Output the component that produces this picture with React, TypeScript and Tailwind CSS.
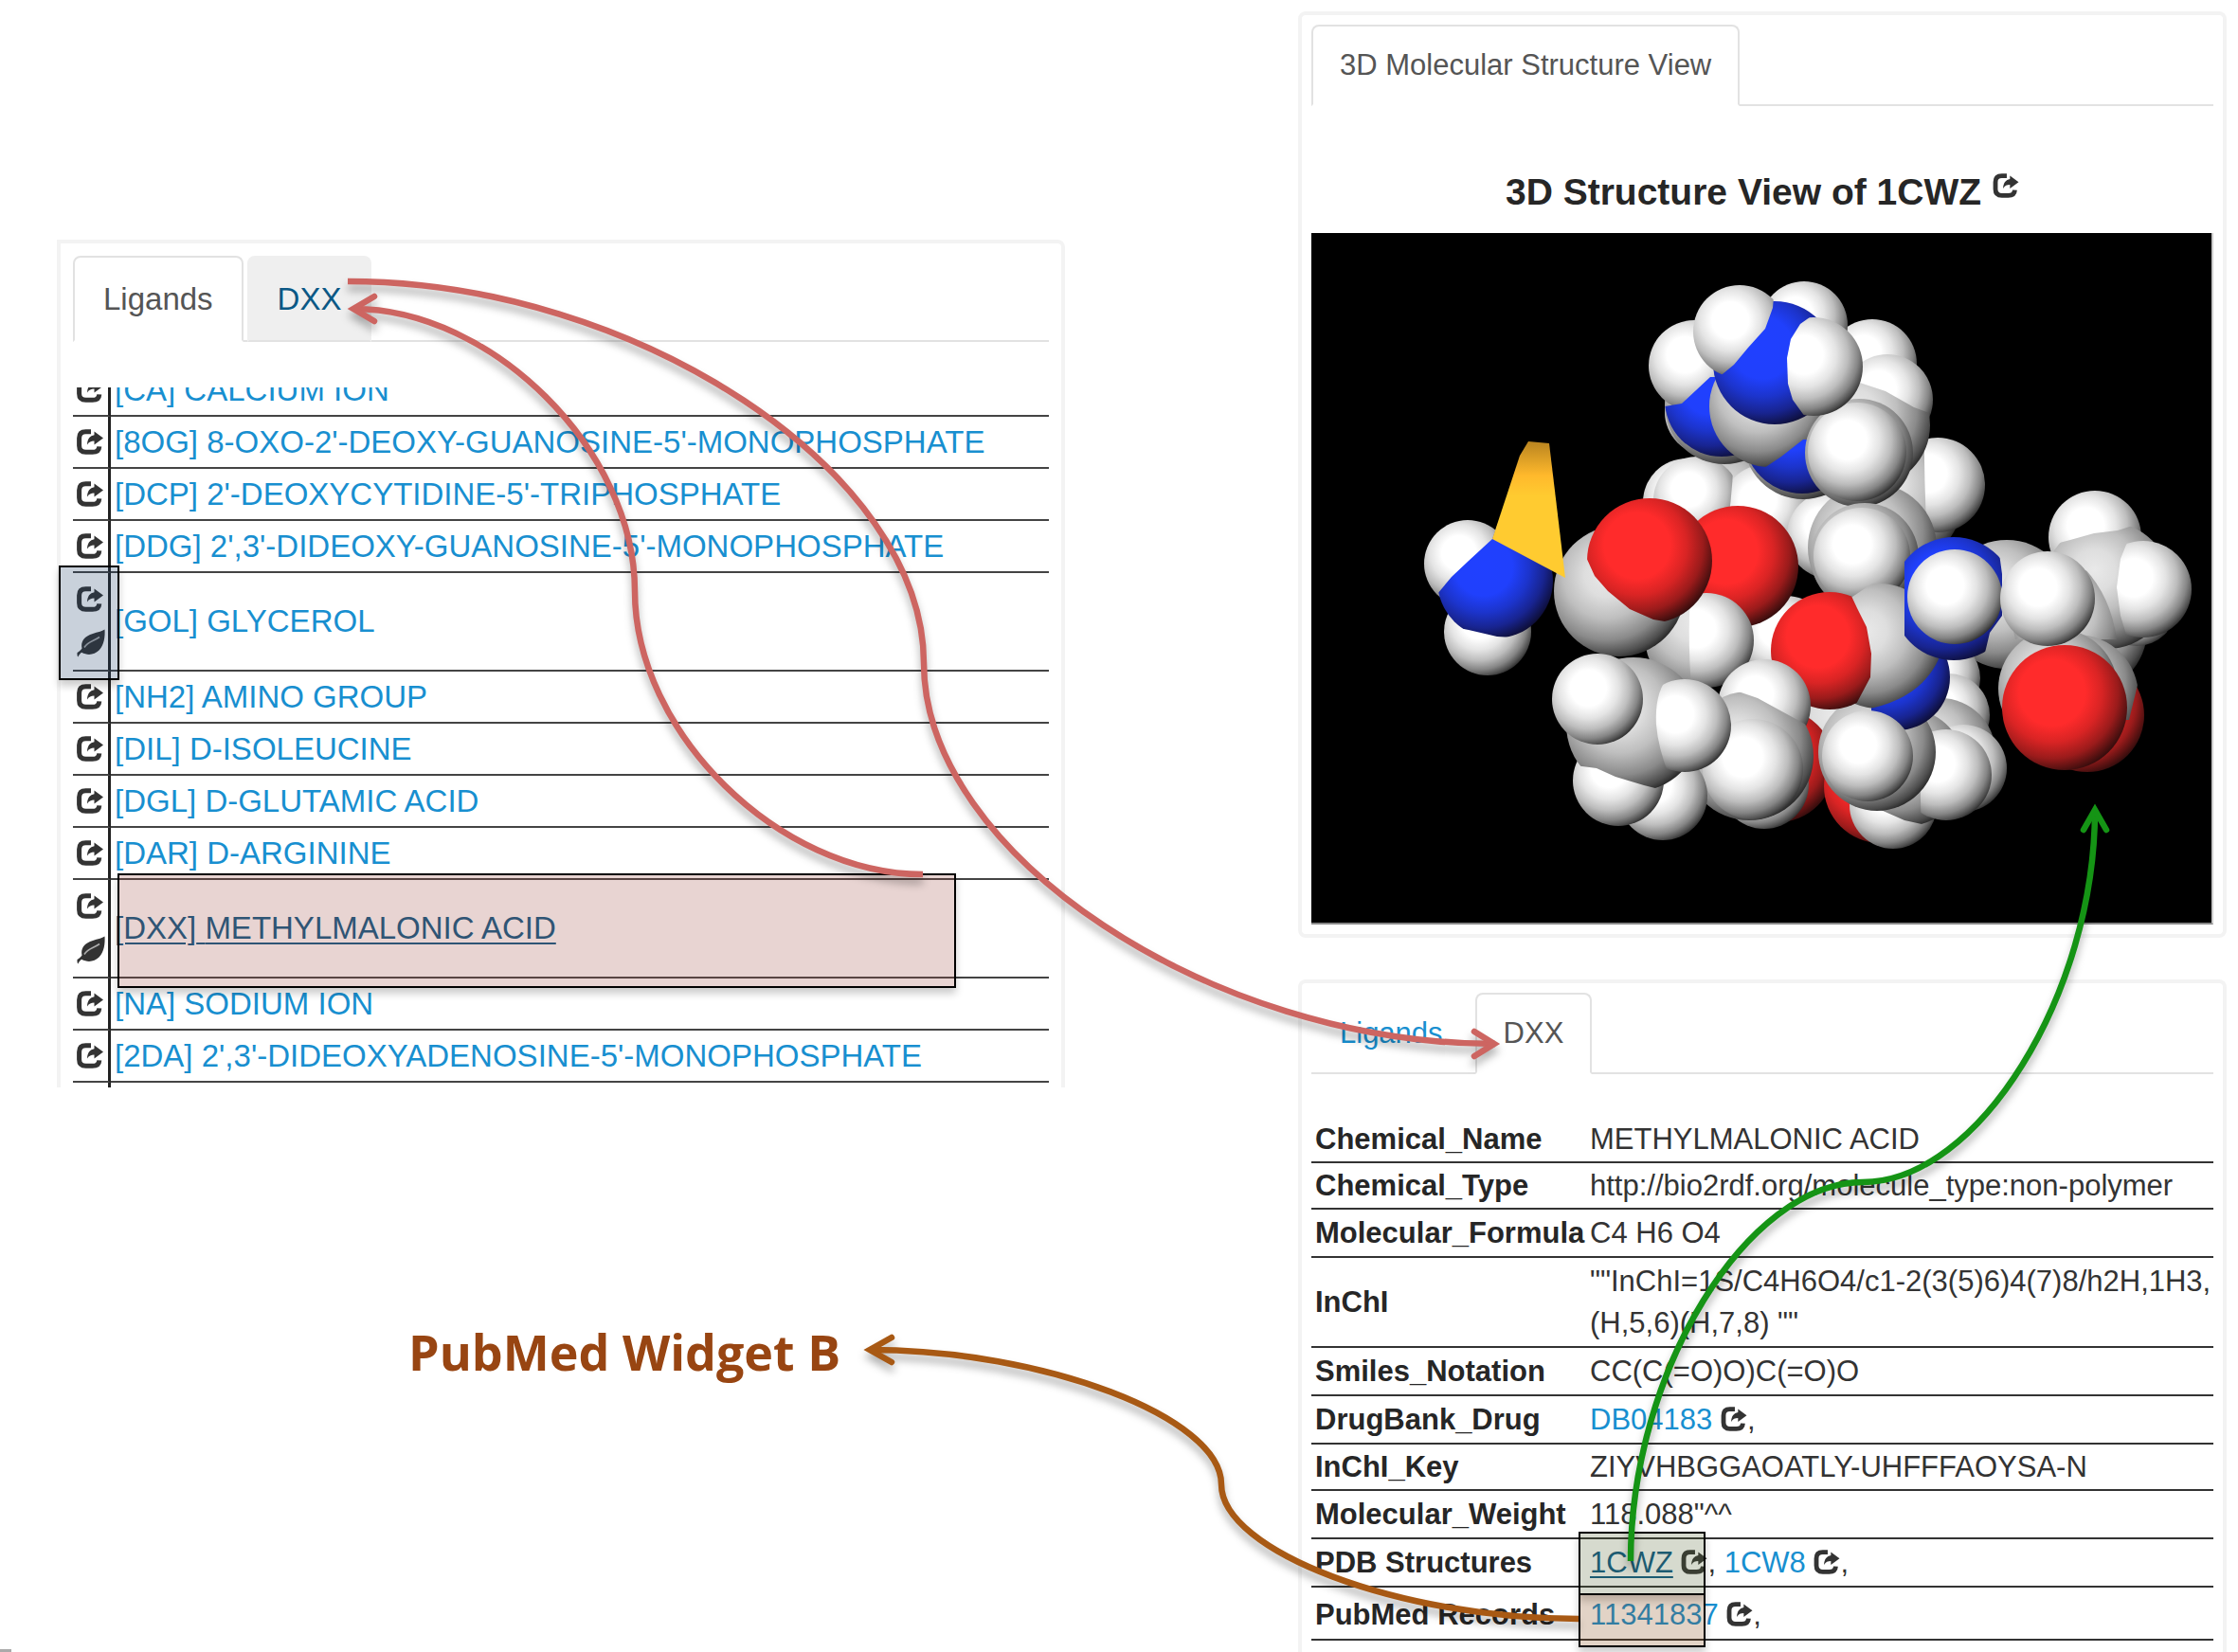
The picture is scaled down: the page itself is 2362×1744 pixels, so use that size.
import React from "react";

type AtomKind = "H" | "C" | "N" | "O";

const ligands: { id: string; code: string; name: string; leaf?: boolean; mark?: "icons" | "name" }[] = [
  { id: "ca", code: "[CA]", name: "CALCIUM ION" },
  { id: "8og", code: "[8OG]", name: "8-OXO-2'-DEOXY-GUANOSINE-5'-MONOPHOSPHATE" },
  { id: "dcp", code: "[DCP]", name: "2'-DEOXYCYTIDINE-5'-TRIPHOSPHATE" },
  { id: "ddg", code: "[DDG]", name: "2',3'-DIDEOXY-GUANOSINE-5'-MONOPHOSPHATE" },
  { id: "gol", code: "[GOL]", name: "GLYCEROL", leaf: true, mark: "icons" },
  { id: "nh2", code: "[NH2]", name: "AMINO GROUP" },
  { id: "dil", code: "[DIL]", name: "D-ISOLEUCINE" },
  { id: "dgl", code: "[DGL]", name: "D-GLUTAMIC ACID" },
  { id: "dar", code: "[DAR]", name: "D-ARGININE" },
  { id: "dxx", code: "[DXX]", name: "METHYLMALONIC ACID", leaf: true, mark: "name" },
  { id: "na", code: "[NA]", name: "SODIUM ION" },
  { id: "2da", code: "[2DA]", name: "2',3'-DIDEOXYADENOSINE-5'-MONOPHOSPHATE" },
];

function ShareIcon({ className = "" }: { className?: string }) {
  return (
    <svg viewBox="0 0 28 27" className={className} aria-hidden="true">
      <path
        d="M15 2.700H9.500C5 2.700 2.600 5.200 2.600 9.500v8c0 4.400 2.500 6.800 7 6.800h7c4.500 0 7-2.200 7.200-6"
        fill="none"
        stroke="currentColor"
        strokeWidth="5"
      />
      <path d="M18.500 2.500 28 9.500l-9.500 7v-4c-3.500 0-5.500 1-7.500 4 .2-6 3-9.500 7.500-10.200z" fill="currentColor" />
    </svg>
  );
}

function LeafIcon({ className = "" }: { className?: string }) {
  return (
    <svg viewBox="0 0 30 30" className={className} aria-hidden="true">
      <path
        d="M29.500.5C26 3 20 3.500 14 6 7.500 9 4 13.500 5.500 20.500 4 22.500 2 24 .5 25c0 1.500-.2 3 .8 4.500C2.500 27.500 3.500 26 5 24.800 12 28.500 19 27 23.500 22.500 29 17 30 8 29.500.5z"
        fill="currentColor"
      />
      <path d="M8 19.500C12 13 18 13 24 8.500" fill="none" stroke="white" strokeOpacity=".6" strokeWidth="1.600" />
    </svg>
  );
}

function Tab({ children, active, hover, small }: { children: React.ReactNode; active?: boolean; hover?: boolean; small?: boolean }) {
  const tone = active
    ? "border-[#e2e2e2] bg-white text-[#555]"
    : hover
      ? "border-[#efefef] border-b-[#e2e2e2] bg-[#efefef] text-[#0b5885]"
      : "border-transparent border-b-[#e2e2e2] text-[#188fd0]";
  return (
    <button
      type="button"
      role="tab"
      aria-selected={!!active}
      className={`rounded-t-lg border-2 ${active ? "border-b-white" : ""} ${small ? "h-[86px] px-[28px] text-[31px]" : "h-[91px] px-[30px] text-[33px]"} ${tone}`}
    >
      {children}
    </button>
  );
}

function Tabs({ children }: { children: React.ReactNode }) {
  return (
    <div role="tablist" className="flex gap-1 bg-[linear-gradient(#e2e2e2,#e2e2e2)] bg-[length:100%_2px] bg-bottom bg-no-repeat">
      {children}
    </div>
  );
}

const boxShadow = "shadow-[0_6px_8px_rgba(0,0,0,0.2)]";

function LigandsPanel() {
  return (
    <section className="h-[895px] overflow-hidden rounded-tr-lg border-4 border-b-0 border-[#f3f3f3] px-[13px] pt-[13px]">
      <Tabs>
        <Tab active>Ligands</Tab>
        <Tab hover>DXX</Tab>
      </Tabs>
      <div className="mt-12 overflow-hidden">
        <table className="-mt-6 w-full border-separate border-spacing-0 text-[33px] leading-[38px]">
          <tbody>
            {ligands.map((l) => (
              <tr key={l.id} className={l.leaf ? "h-[104px]" : "h-[55px]"}>
                <td className="w-10 border-r-3 border-b-2 border-r-[#222] border-b-[#444] p-0 pl-1 text-[#333]">
                  <div className="flex flex-col gap-[18px]">
                    <ShareIcon className="h-[27px] w-7" />
                    {l.leaf && <LeafIcon className="h-[30px] w-[30px]" />}
                  </div>
                </td>
                <td className="border-b-2 border-[#444] p-0 pl-[4px]">
                  <a href={`#${l.id}`} className={l.mark === "name" ? "text-[#0b5885] underline decoration-2 underline-offset-4" : "text-[#188fd0]"}>
                    {l.code} {l.name}
                  </a>
                </td>
              </tr>
            ))}
            <tr className="h-[55px]">
              <td className="border-r-3 border-r-[#222]" />
              <td />
            </tr>
          </tbody>
        </table>
      </div>
    </section>
  );
}

function Grad({ id, stops }: { id: string; stops: [number, string][] }) {
  return (
    <radialGradient id={id} cx=".4" cy=".38" r=".66">
      {stops.map(([o, c]) => (
        <stop key={o} offset={o} stopColor={c} />
      ))}
    </radialGradient>
  );
}

function Atom({ k, x, y, r, clip }: { k: AtomKind; x: number; y: number; r: number; clip?: string }) {
  const id = React.useId();
  const ball = <circle cx={x} cy={y} r={r} fill={`url(#atom${k})`} clipPath={clip ? `url(#${id})` : undefined} />;
  if (!clip) return ball;
  return (
    <>
      <clipPath id={id}>
        <path d={clip} />
      </clipPath>
      {ball}
    </>
  );
}

function Molecule() {
  return (
    <svg viewBox="1384 246 950 728" className="block w-full bg-black" role="img" aria-label="Space-filling model of 1CWZ">
      <defs>
        <Grad id="atomH" stops={[[0, "#fff"], [0.3, "#fff"], [0.5, "#e4e4e4"], [0.68, "#bdbdbd"], [0.84, "#858585"], [0.94, "#505050"], [1, "#2a2a2a"]]} />
        <Grad id="atomC" stops={[[0, "#e9e9e9"], [0.25, "#dedede"], [0.5, "#bfbfbf"], [0.75, "#8a8a8a"], [0.92, "#4c4c4c"], [1, "#242424"]]} />
        <Grad id="atomN" stops={[[0, "#2040ff"], [0.38, "#2040fc"], [0.6, "#1c34cc"], [0.8, "#182490"], [1, "#0d0d33"]]} />
        <Grad id="atomO" stops={[[0, "#ff2b2b"], [0.4, "#ff2b2b"], [0.6, "#d92424"], [0.8, "#9a1b1b"], [1, "#300c0c"]]} />
        <linearGradient id="ribbon" x1="0" y1="0" x2="0" y2="1">
          <stop offset="0" stopColor="#b98420" />
          <stop offset=".25" stopColor="#ffb92c" />
          <stop offset=".4" stopColor="#ffcb30" />
        </linearGradient>
      </defs>

      <Atom k="H" x={1549} y={595} r={46} />
      <Atom k="H" x={1570} y={667} r={46} />
      <Atom k="N" x={1578} y={613} r={61} clip="M1575 569 1600 500H1700V674H1615L1580 672 1550 665 1524 660 1480 640 1517 627 1532 609 1550 592Z" />

      <Atom k="H" x={1803} y={435} r={46} />
      <Atom k="H" x={1780} y={530} r={46} />
      <Atom k="C" x={1826} y={540} r={62} />
      <Atom k="H" x={1865} y={540} r={50} />
      <Atom k="H" x={1791} y={528} r={46} clip="M1700 440H1826Q1836 500 1815 600H1700Z" />
      <Atom k="H" x={1932} y={565} r={46} />

      <Atom k="C" x={2003} y={528} r={68} />
      <Atom k="H" x={2045} y={512} r={50} clip="M2031 440H2120V600H2036Q2030 520 2031 440Z" />
      <Atom k="C" x={1990} y={650} r={68} />
      <Atom k="C" x={1976} y={578} r={68} />

      <Atom k="H" x={1976} y={384} r={47} />
      <Atom k="H" x={1992} y={422} r={48} />
      <Atom k="C" x={1972} y={449} r={65} clip="M1880 400 1963 404 1990 413 2020 430 2060 445V560H1880Z" />
      <Atom k="C" x={1903} y={464} r={63} />
      <Atom k="N" x={1902} y={459} r={62} />
      <Atom k="C" x={1820} y={427} r={63} />
      <Atom k="H" x={1788} y={386} r={48} />
      <Atom k="N" x={1817} y={422} r={60} clip="M1757 429 1775 426 1790 412 1805 398H1900V500H1740Z" />
      <Atom k="C" x={1868} y={429} r={64} clip="M1805 380H1940V464H1903L1880 482 1853 500H1800Z" />
      <Atom k="C" x={1962} y={478} r={57} />
      <Atom k="H" x={1960} y={477} r={52} />
      <Atom k="H" x={1904} y={343} r={46} />
      <Atom k="N" x={1873} y={383} r={65} />
      <Atom k="H" x={1836} y={350} r={49} clip="M1780 290H1874L1871 325 1863 347 1845 367 1830 385 1813 399H1780Z" />
      <Atom k="H" x={1914} y={387} r={52} clip="M1917 330 1900 342 1890 358 1886 378 1887 405 1892 422 1905 440H1980V330Z" />

      <Atom k="C" x={1968} y={588} r={57} />
      <Atom k="H" x={1965} y={587} r={51} />

      <Atom k="C" x={2118} y={638} r={68} />
      <Atom k="C" x={2200} y={665} r={66} />
      <Atom k="H" x={2255} y={640} r={42} />
      <Atom k="H" x={2211} y={567} r={49} />
      <Atom k="C" x={2224} y={618} r={67} clip="M2150 576 2162 576 2185 570 2210 563 2235 560 2257 553 2300 540V700H2150Z" />
      <Atom k="H" x={2262} y={622} r={51} clip="M2250 560 2238 590 2234 620 2238 650 2250 690H2330V560Z" />
      <Atom k="C" x={2185} y={660} r={60} clip="M2200 600Q2228 630 2234 675H2120V600Z" />
      <Atom k="O" x={2203} y={755} r={60} />
      <Atom k="C" x={2192} y={735} r={65} clip="M2100 650H2258V715L2247 760H2100Z" />
      <Atom k="C" x={2172} y={727} r={63} />
      <Atom k="O" x={2179} y={747} r={66} />

      <Atom k="C" x={1945} y={770} r={60} />
      <Atom k="H" x={2048} y={716} r={42} />
      <Atom k="H" x={2056} y={755} r={44} />
      <Atom k="C" x={2048} y={795} r={58} />
      <Atom k="H" x={2072} y={811} r={46} />
      <Atom k="O" x={1876} y={808} r={60} />
      <Atom k="O" x={1985} y={830} r={60} />
      <Atom k="H" x={1998} y={850} r={46} />
      <Atom k="C" x={2012} y={810} r={62} clip="M1900 740H2100V880L2037 872 2010 866 1985 855 1963 845 1900 830Z" />
      <Atom k="H" x={2054} y={818} r={48} clip="M2035 770Q2024 815 2028 870H2110V760Z" />
      <Atom k="C" x={1981} y={794} r={62} />
      <Atom k="N" x={2002} y={715} r={56} clip="M1975 747Q2028 735 2047 680H2080V790H1975Z" />
      <Atom k="H" x={1971} y={798} r={48} />
      <Atom k="C" x={1983} y={682} r={66} clip="M1940 640 2000 600 2050 650 2046 696Q2028 735 1978 747L1930 760Z" />

      <Atom k="N" x={2062} y={632} r={65} clip="M2010 540H2104L2113 606V650L2100 668 2090 710H2010Z" />
      <Atom k="H" x={2063} y={630} r={50} />
      <Atom k="H" x={2161} y={632} r={50} />

      <Atom k="H" x={1885} y={676} r={47} />
      <Atom k="O" x={1834} y={598} r={64} />
      <Atom k="O" x={1931} y={687} r={62} clip="M1860 610H1945L1960 642 1970 662 1975 690 1974 715 1957 747 1930 760H1860Z" />
      <Atom k="C" x={1800} y={672} r={64} clip="M1720 640H1800V740H1720Z" />
      <Atom k="H" x={1801} y={676} r={50} clip="M1785 610Q1780 670 1786 740H1870V610Z" />
      <Atom k="C" x={1709} y={624} r={69} />
      <Atom k="O" x={1741} y={592} r={66} clip="M1673 586 1683 608 1697 624 1720 643 1745 654 1763 657 1830 680V510H1660Z" />

      <Atom k="H" x={1862} y={828} r={47} />
      <Atom k="H" x={1862} y={745} r={49} />
      <Atom k="C" x={1846} y={798} r={68} clip="M1770 700 1820 725 1855 737 1908 766 1930 780V880H1770Z" />
      <Atom k="H" x={1850} y={812} r={53} />
      <Atom k="H" x={1755} y={840} r={47} />
      <Atom k="H" x={1708} y={824} r={48} />
      <Atom k="C" x={1724} y={765} r={71} clip="M1640 680H1800V850L1763 836 1735 829 1705 820 1685 811 1662 808 1640 800Z" />
      <Atom k="H" x={1686} y={738} r={48} />
      <Atom k="H" x={1778} y={766} r={49} clip="M1762 713Q1746 730 1748 765 1750 790 1762 820H1840V710Z" />

      <path d="M1613 466 1635 468 1652 610 1575 569 1604 481Z" fill="url(#ribbon)" />
    </svg>
  );
}

function StructurePanel() {
  return (
    <section className="rounded-lg border-4 border-[#f3f3f3] p-2.5">
      <Tabs>
        <Tab active small>3D Molecular Structure View</Tab>
      </Tabs>
      <h2 className="mt-[64px] flex h-[70px] justify-center gap-3 text-[39px] leading-[54px] font-bold text-[#262626]">
        3D Structure View of 1CWZ
        <ShareIcon className="mt-[7px] h-[26px] w-7 text-[#333]" />
      </h2>
      <div className="border-r-2 border-b-2 border-r-[#ccc] border-b-[#888]">
        <Molecule />
      </div>
    </section>
  );
}

function Ref({ children, hover }: { children: string; hover?: boolean }) {
  return (
    <>
      <a href={`#${children}`} className={hover ? "text-[#0b5885] underline decoration-2 underline-offset-4" : "text-[#188fd0]"}>
        {children}
      </a>{" "}
      <ShareIcon className="inline-block h-[26px] w-7 align-[-2px]" />,
    </>
  );
}

const details: { label: string; height: string; value: React.ReactNode }[] = [
  { label: "Chemical_Name", height: "h-12", value: "METHYLMALONIC ACID" },
  { label: "Chemical_Type", height: "h-[49px]", value: "http://bio2rdf.org/molecule_type:non-polymer" },
  { label: "Molecular_Formula", height: "h-[51px]", value: "C4 H6 O4" },
  { label: "InChI", height: "h-[95px]", value: <>""InChI=1S/C4H6O4/c1-2(3(5)6)4(7)8/h2H,1H3,<br />(H,5,6)(H,7,8) ""</> },
  { label: "Smiles_Notation", height: "h-[51px]", value: "CC(C(=O)O)C(=O)O" },
  { label: "DrugBank_Drug", height: "h-[51px]", value: <Ref>DB04183</Ref> },
  { label: "InChI_Key", height: "h-[49px]", value: "ZIYVHBGGAOATLY-UHFFFAOYSA-N" },
  { label: "Molecular_Weight", height: "h-[51px]", value: '118.088"^^' },
  {
    label: "PDB Structures",
    height: "h-[51px]",
    value: (
      <>
        <Ref hover>1CWZ</Ref> <Ref>1CW8</Ref>
        <span className={`absolute -top-2 -left-2 z-10 h-[67px] w-[134px] border-2 border-black bg-[rgba(84,101,51,0.24)] ${boxShadow}`} />
      </>
    ),
  },
  {
    label: "PubMed Records",
    height: "h-[56px] *:pt-1",
    value: (
      <>
        <Ref>11341837</Ref>
        <span className={`absolute top-2 -left-2 z-10 h-[55px] w-[134px] border-2 border-t-0 border-black bg-[rgba(134,72,18,0.24)] ${boxShadow}`} />
      </>
    ),
  },
];

function DetailsPanel() {
  return (
    <section className="flex-1 rounded-t-lg border-4 border-b-0 border-[#f3f3f3] p-2.5 pb-0">
      <Tabs>
        <Tab small>Ligands</Tab>
        <Tab active small>DXX</Tab>
      </Tabs>
      <table className="mt-[46px] w-full border-separate border-spacing-0 text-[31px] leading-[44px] text-[#333]">
        <tbody>
          {details.map((d) => (
            <tr key={d.label} className={d.height}>
              <th scope="row" className="w-[290px] border-b-2 border-[#333] pl-1 text-left font-bold text-[#262626]">
                {d.label}
              </th>
              <td className="relative border-b-2 border-[#333] pl-1 whitespace-nowrap">{d.value}</td>
            </tr>
          ))}
        </tbody>
      </table>
    </section>
  );
}

function Connectors() {
  return (
    <svg viewBox="0 0 2362 1744" className="pointer-events-none absolute inset-x-0 top-0 z-20 w-full" fill="none" aria-hidden="true">
      <g strokeWidth="6.500" className="drop-shadow-[0_7px_4px_rgba(0,0,0,0.3)]">
        <g stroke="#cd6561">
          <path d="M367 297C671 297 975 498 975 700S1279 1102 1578 1102" />
          <path d="M1556 1089 1577 1102 1556 1115" strokeLinecap="round" />
          <path d="M974 923C822 923 670 773 670 624S519 326 373 326" />
          <path d="M395 313 373 326 395 339" strokeLinecap="round" />
        </g>
        <g stroke="#159415">
          <path d="M1721 1648C1721 1448 1844 1248 1966 1248S2211 1049 2211 855" />
          <path d="M2199 876 2211 855 2223 876" strokeLinecap="round" />
        </g>
        <g stroke="#a85914">
          <path d="M1666 1709C1478 1709 1289 1638 1289 1567S1101 1425 918 1425" />
          <path d="M941 1412 918 1425 941 1438" strokeLinecap="round" />
        </g>
      </g>
    </svg>
  );
}

export default function App() {
  return (
    <div className="relative min-h-screen overflow-hidden bg-white font-['Liberation_Sans',Arial,sans-serif]">
      <main className="grid h-[1744px] grid-cols-[1064fr_980fr] gap-x-[246px] pr-3 pl-[60px]">
        <div className="relative pt-[253px]">
          <LigandsPanel />
          <span className={`absolute top-[597px] left-[2px] h-[121px] w-16 border-2 border-black bg-[rgba(30,64,105,0.24)] ${boxShadow}`} />
          <span className={`absolute top-[922px] left-16 h-[121px] w-[885px] border-2 border-black bg-[rgba(159,76,67,0.24)] ${boxShadow}`} />
          <p className="mt-[244px] pl-[371px] font-['Open_Sans',sans-serif] text-[52px] leading-[70px] font-bold text-[#984512]">PubMed Widget B</p>
        </div>
        <div className="flex flex-col gap-[44px] pt-3">
          <StructurePanel />
          <DetailsPanel />
        </div>
      </main>
      <Connectors />
      <span className="absolute bottom-0 left-0 h-[3px] w-3 bg-[#aaa]" />
    </div>
  );
}
